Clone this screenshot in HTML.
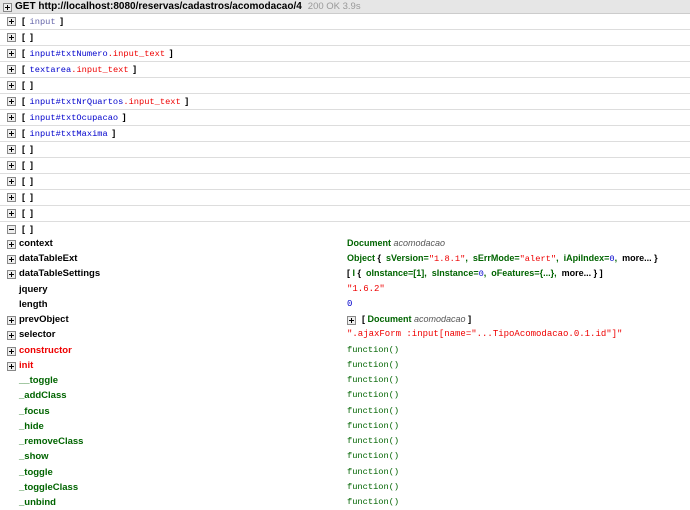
<!DOCTYPE html>
<html><head><meta charset="utf-8"><style>
body{margin:0;width:690px;height:500px;overflow:hidden;background:#fff;font-family:"Liberation Sans",sans-serif;position:relative}
.hdr{position:absolute;left:0;top:0;width:690px;height:13px;background:#e6e6e6;border-bottom:1px solid #ccc;font-size:10px;font-weight:bold;line-height:13px;color:#000}
.hdr .pl{position:absolute;left:3px;top:3px}
.hdr span.t{position:absolute;left:15px;top:0;white-space:nowrap}
.hdr .st{color:#999;font-weight:normal;margin-left:6px;font-size:9.5px}
.pl{position:absolute;width:7px;height:7px;border:1px solid #888;background:#eee;box-sizing:content-box}
.pl:before{content:"";position:absolute;left:1px;top:3px;width:5px;height:1px;background:#000}
.pl.p:after{content:"";position:absolute;left:3px;top:1px;width:1px;height:5px;background:#000}
.r{position:absolute;left:0;width:690px;height:15px;border-bottom:1px solid #ddd}
.r .pl{left:7px;top:3px}
.r .x{position:absolute;left:20px;top:0;line-height:15px;font-size:9px;white-space:nowrap}
.b{color:#000;font-weight:bold;font-family:"Liberation Sans",sans-serif;font-size:9px;margin:0 2px}
.tag{color:#00c;font-family:"Liberation Mono",monospace;font-size:8.7px}
.cls{color:#e00;font-family:"Liberation Mono",monospace;font-size:8.7px}
.p2{position:absolute;left:0;width:690px;height:15px;font-size:9.5px;font-weight:bold;line-height:15px;white-space:nowrap}
.p2 .pl{left:7px;top:4px}
.p2 .k{position:absolute;left:19px}
.p2 .v{position:absolute;left:347px;font-size:9px}
.g{color:#006400}
.rd{color:#e00}
.str{color:#e00;font-family:"Liberation Mono",monospace;font-weight:normal;font-size:8.7px}
.num{color:#00c;font-weight:normal;font-family:"Liberation Mono",monospace;font-size:8.7px}
.fn{color:#006400;font-family:"Liberation Mono",monospace;font-weight:normal;font-size:8.7px!important}
.it{color:#555;font-style:italic;font-weight:normal}
.bk{color:#000}
</style></head><body>
<div class="hdr"><span class="pl p"></span><span class="t">GET http://localhost:8080/reservas/cadastros/acomodacao/4<span class="st">200 OK 3.9s</span></span></div>

<div class="r" style="top:14px"><span class="pl p"></span><span class="x"><span class="b">[</span> <span class="tag" style="color:#66a">input</span> <span class="b">]</span></span></div>
<div class="r" style="top:30px"><span class="pl p"></span><span class="x"><span class="b">[ &nbsp;]</span></span></div>
<div class="r" style="top:46px"><span class="pl p"></span><span class="x"><span class="b">[</span> <span class="tag">input#txtNumero</span><span class="cls">.input_text</span> <span class="b">]</span></span></div>
<div class="r" style="top:62px"><span class="pl p"></span><span class="x"><span class="b">[</span> <span class="tag">textarea</span><span class="cls">.input_text</span> <span class="b">]</span></span></div>
<div class="r" style="top:78px"><span class="pl p"></span><span class="x"><span class="b">[ &nbsp;]</span></span></div>
<div class="r" style="top:94px"><span class="pl p"></span><span class="x"><span class="b">[</span> <span class="tag">input#txtNrQuartos</span><span class="cls">.input_text</span> <span class="b">]</span></span></div>
<div class="r" style="top:110px"><span class="pl p"></span><span class="x"><span class="b">[</span> <span class="tag">input#txtOcupacao</span> <span class="b">]</span></span></div>
<div class="r" style="top:126px"><span class="pl p"></span><span class="x"><span class="b">[</span> <span class="tag">input#txtMaxima</span> <span class="b">]</span></span></div>
<div class="r" style="top:142px"><span class="pl p"></span><span class="x"><span class="b">[ &nbsp;]</span></span></div>
<div class="r" style="top:158px"><span class="pl p"></span><span class="x"><span class="b">[ &nbsp;]</span></span></div>
<div class="r" style="top:174px"><span class="pl p"></span><span class="x"><span class="b">[ &nbsp;]</span></span></div>
<div class="r" style="top:190px"><span class="pl p"></span><span class="x"><span class="b">[ &nbsp;]</span></span></div>
<div class="r" style="top:206px"><span class="pl p"></span><span class="x"><span class="b">[ &nbsp;]</span></span></div>
<div class="r" style="top:222px;border:none"><span class="pl"></span><span class="x"><span class="b">[ &nbsp;]</span></span></div>

<div class="p2" style="top:236px"><span class="pl p"></span><span class="k">context</span><span class="v g">Document <span class="it">acomodacao</span></span></div>
<div class="p2" style="top:251px"><span class="pl p"></span><span class="k">dataTableExt</span><span class="v g">Object <span class="bk">{</span> &nbsp;sVersion=<span class="str">"1.8.1"</span>, &nbsp;sErrMode=<span class="str">"alert"</span>, &nbsp;iApiIndex=<span class="num">0</span>, &nbsp;<span class="bk">more... }</span></span></div>
<div class="p2" style="top:266px"><span class="pl p"></span><span class="k">dataTableSettings</span><span class="v g"><span class="bk">[ </span>I <span class="bk">{</span> &nbsp;oInstance=[1], &nbsp;sInstance=<span class="num">0</span>, &nbsp;oFeatures={...}, &nbsp;<span class="bk">more... } ]</span></span></div>
<div class="p2" style="top:282px"><span class="k">jquery</span><span class="v str">"1.6.2"</span></div>
<div class="p2" style="top:297px"><span class="k">length</span><span class="v num">0</span></div>
<div class="p2" style="top:312px"><span class="pl p"></span><span class="k">prevObject</span><span class="v g"><span class="pl p" style="left:0;top:4px"></span><span style="margin-left:15px" class="bk">[</span> Document <span class="it">acomodacao</span> <span class="bk">]</span></span></div>
<div class="p2" style="top:327px"><span class="pl p"></span><span class="k">selector</span><span class="v str">".ajaxForm :input[name="...TipoAcomodacao.0.1.id"]"</span></div>
<div class="p2" style="top:343px"><span class="pl p"></span><span class="k rd">constructor</span><span class="v fn">function()</span></div>
<div class="p2" style="top:358px"><span class="pl p"></span><span class="k rd">init</span><span class="v fn">function()</span></div>
<div class="p2 g" style="top:373px"><span class="k">__toggle</span><span class="v fn">function()</span></div>
<div class="p2 g" style="top:388px"><span class="k">_addClass</span><span class="v fn">function()</span></div>
<div class="p2 g" style="top:404px"><span class="k">_focus</span><span class="v fn">function()</span></div>
<div class="p2 g" style="top:419px"><span class="k">_hide</span><span class="v fn">function()</span></div>
<div class="p2 g" style="top:434px"><span class="k">_removeClass</span><span class="v fn">function()</span></div>
<div class="p2 g" style="top:449px"><span class="k">_show</span><span class="v fn">function()</span></div>
<div class="p2 g" style="top:465px"><span class="k">_toggle</span><span class="v fn">function()</span></div>
<div class="p2 g" style="top:480px"><span class="k">_toggleClass</span><span class="v fn">function()</span></div>
<div class="p2 g" style="top:495px"><span class="k">_unbind</span><span class="v fn">function()</span></div>
</body></html>
